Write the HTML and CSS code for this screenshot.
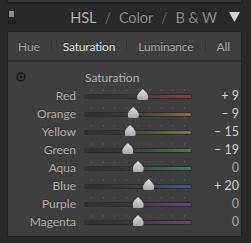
FILE: index.html
```html
<!DOCTYPE html>
<html lang="en">
<head>
  <meta charset="UTF-8">
  <title>HSL Panel</title>
  <link rel="stylesheet" href="styles.css">
</head>
<body>

  <div class="prev-panel"></div>

  <div class="header">
    <span class="switch"></span>
    <div class="title">
      <span class="active">HSL</span>
      <span class="slash">/</span>
      <span>Color</span>
      <span class="slash">/</span>
      <span>B &amp; W</span>
      <svg class="arrow" width="11" height="10" viewBox="0 0 11 10">
        <polygon points="0,0 11,0 5.5,10" fill="#d4d4d4"/>
      </svg>
    </div>
  </div>

  <div class="panel">
    <div class="tabs">
      <span class="tab">Hue</span>
      <span class="sep"></span>
      <span class="tab current">Saturation</span>
      <span class="sep"></span>
      <span class="tab">Luminance</span>
      <span class="sep"></span>
      <span class="tab">All</span>
    </div>

    <div class="content">
      <div class="row">
        <svg class="target" width="10" height="10" viewBox="0 0 10 10">
          <circle cx="5" cy="5" r="3.9" fill="none" stroke="#141414" stroke-width="1.5"/>
          <circle cx="5" cy="5" r="1.4" fill="#141414"/>
        </svg>
        <span class="section">Saturation</span>
        <span></span>
      </div>

      <div class="row">
        <span class="label">Red</span>
        <div class="track red"><span class="thumb" style="left: 54.5%"></span></div>
        <span class="value">+ 9</span>
      </div>
      <div class="row">
        <span class="label">Orange</span>
        <div class="track orange"><span class="thumb" style="left: 45.5%"></span></div>
        <span class="value">&#8211; 9</span>
      </div>
      <div class="row">
        <span class="label">Yellow</span>
        <div class="track yellow"><span class="thumb" style="left: 42.5%"></span></div>
        <span class="value">&#8211; 15</span>
      </div>
      <div class="row">
        <span class="label">Green</span>
        <div class="track green"><span class="thumb" style="left: 40.5%"></span></div>
        <span class="value">&#8211; 19</span>
      </div>
      <div class="row">
        <span class="label">Aqua</span>
        <div class="track aqua"><span class="thumb" style="left: 50%"></span></div>
        <span class="value zero">0</span>
      </div>
      <div class="row">
        <span class="label">Blue</span>
        <div class="track blue"><span class="thumb" style="left: 60%"></span></div>
        <span class="value">+ 20</span>
      </div>
      <div class="row">
        <span class="label">Purple</span>
        <div class="track purple"><span class="thumb" style="left: 50%"></span></div>
        <span class="value zero">0</span>
      </div>
      <div class="row">
        <span class="label">Magenta</span>
        <div class="track magenta"><span class="thumb" style="left: 50%"></span></div>
        <span class="value zero">0</span>
      </div>
    </div>
  </div>

</body>
</html>
```

FILE: styles.css
```css
body {
  margin: 0;
  width: 251px;
  height: 243px;
  background-color: #292929;
  font-family: Lato, "Open Sans", sans-serif;
  overflow: hidden;
}

.prev-panel {
  height: 2px;
  margin: 0 9px 0 7px;
  background-color: #3a3a3a;
  border: 1px solid #1f1f1f;
  border-top: none;
}

.header {
  height: 28px;
  display: flex;
  align-items: center;
  justify-content: space-between;
  padding: 0 11px 0 8px;
}

.switch {
  width: 7px;
  height: 14px;
  background: linear-gradient(#8c8c8c 0, #8c8c8c 50%, #262626 50%);
  border: 1px solid #1c1c1c;
  box-sizing: border-box;
}

.title {
  display: flex;
  align-items: center;
  font-size: 14.5px;
  letter-spacing: -0.1px;
  color: #8e8e8e;
  text-shadow: 0 -1px 0 #111;
}

.title .active {
  color: #b8b8b8;
}

.title .slash {
  color: #6e6e6e;
  margin: 0 8px;
}

.title .arrow {
  margin-left: 12px;
}

.panel {
  margin: 0 9px 0 7px;
  background-color: #3e3e3e;
  border: 1px solid #222;
}

.tabs {
  height: 28px;
  display: flex;
  align-items: center;
  gap: 11px;
  padding-left: 10px;
  border-bottom: 2px solid #2e2e2e;
  font-size: 12px;
  letter-spacing: -0.15px;
}

.tab {
  color: #a9a9a9;
  text-shadow: 0 -1px 0 #222;
}

.tab.current {
  color: #e4e4e4;
}

.sep {
  width: 1px;
  height: 10px;
  background-color: #303030;
}

.content {
  padding: 6px 0 6px;
}

.row {
  height: 18px;
  display: grid;
  grid-template-columns: 68px 106px 39px;
  column-gap: 9px;
  align-items: center;
  font-size: 12px;
}

.target {
  margin-left: 8px;
}

.section {
  color: #b4b4b4;
  font-size: 12px;
}

.label {
  text-align: right;
  color: #b2b2b2;
  text-shadow: 0 -1px 0 #2a2a2a;
}

.value {
  text-align: right;
  color: #d2d2d2;
  font-size: 12.5px;
}

.value.zero {
  color: #a4a4a4;
}

.track {
  position: relative;
  height: 18px;
  --hue: #777;
}

.track::before {
  content: "";
  position: absolute;
  left: 6px;
  right: 6px;
  top: 3px;
  height: 2px;
  background: repeating-linear-gradient(to right, #575757 0, #575757 1px, transparent 1px, transparent 11.63px);
}

.track::after {
  content: "";
  position: absolute;
  left: 0;
  right: 0;
  top: 9px;
  height: 3px;
  border-radius: 2px;
  box-shadow: 0 0 0 1px #2c2c2c;
  background: linear-gradient(to right, #2f2f2f 0, #353535 35%, var(--hue) 100%);
}

.red { --hue: #8e3a3c; }
.orange { --hue: #8c6a3a; }
.yellow { --hue: #7e7a3c; }
.green { --hue: #4e7c3e; }
.aqua { --hue: #3c7c6e; }
.blue { --hue: #3c5e8c; }
.purple { --hue: #6c3e80; }
.magenta { --hue: #7e3c6e; }

.thumb {
  position: absolute;
  top: 3px;
  width: 11px;
  height: 11px;
  margin-left: -5.5px;
  z-index: 1;
  background: linear-gradient(#e0e0e0, #a8a8a8);
  clip-path: polygon(50% 0, 80% 30%, 100% 60%, 100% 90%, 85% 100%, 15% 100%, 0 90%, 0 60%, 20% 30%);
}
```
